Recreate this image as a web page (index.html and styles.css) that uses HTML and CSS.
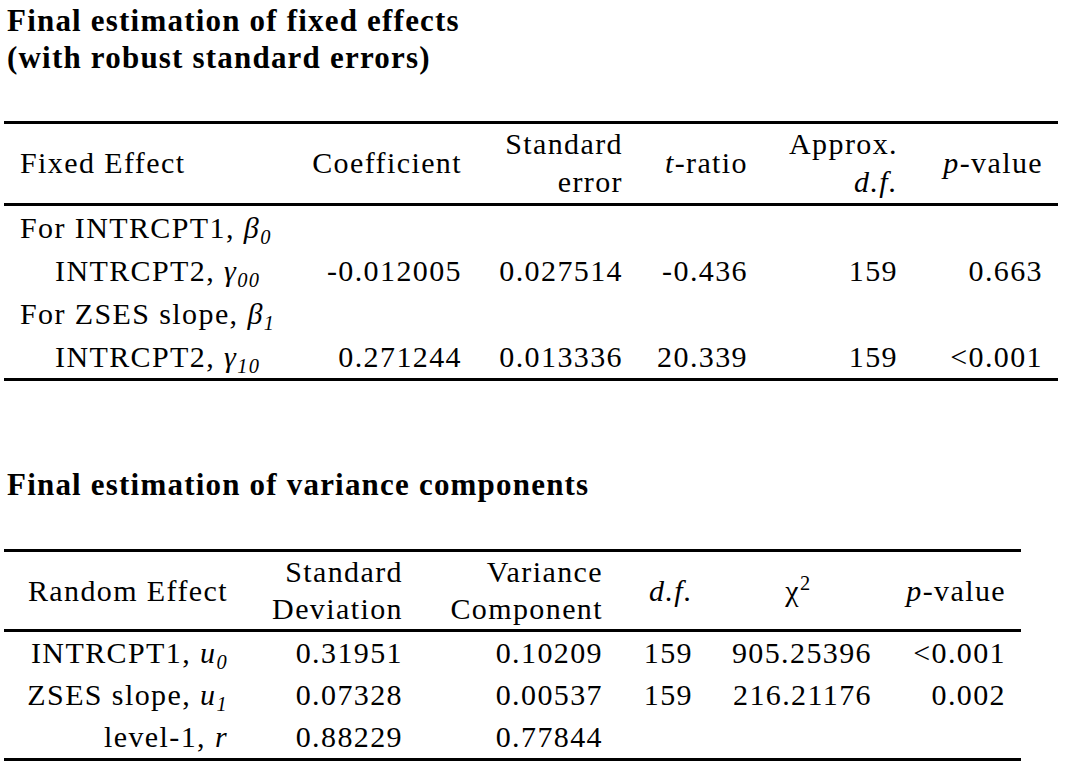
FILE: index.html
```html
<!DOCTYPE html>
<html lang="en">
<head>
<meta charset="utf-8">
<title>HLM output</title>
<link rel="stylesheet" href="styles.css">
</head>
<body>
<div class="page">
  <h1 class="title title-first">Final estimation of fixed effects<br>(with robust standard errors)</h1>
  <table class="stats fixed">
    <colgroup>
      <col class="f1"><col class="f2"><col class="f3"><col class="f4"><col class="f5"><col class="f6">
    </colgroup>
    <thead>
      <tr>
        <th class="left">Fixed Effect</th>
        <th>Coefficient</th>
        <th>Standard<br>error</th>
        <th><i>t</i>-ratio</th>
        <th>Approx.<br><i>d.f.</i></th>
        <th class="last"><i>p</i>-value</th>
      </tr>
    </thead>
    <tbody>
      <tr>
        <td class="left">For INTRCPT1, <i>β<sub>0</sub></i></td>
        <td></td><td></td><td></td><td></td><td class="last"></td>
      </tr>
      <tr>
        <td class="left indent">INTRCPT2, <i>γ<sub>00</sub></i></td>
        <td>-0.012005</td><td>0.027514</td><td>-0.436</td><td>159</td><td class="last">0.663</td>
      </tr>
      <tr>
        <td class="left">For ZSES slope, <i>β<sub>1</sub></i></td>
        <td></td><td></td><td></td><td></td><td class="last"></td>
      </tr>
      <tr>
        <td class="left indent">INTRCPT2, <i>γ<sub>10</sub></i></td>
        <td>0.271244</td><td>0.013336</td><td>20.339</td><td>159</td><td class="last">&lt;0.001</td>
      </tr>
    </tbody>
  </table>

  <h1 class="title title-second">Final estimation of variance components</h1>
  <table class="stats variance">
    <colgroup>
      <col class="v1"><col class="v2"><col class="v3"><col class="v4"><col class="v5"><col class="v6">
    </colgroup>
    <thead>
      <tr>
        <th>Random Effect</th>
        <th>Standard<br>Deviation</th>
        <th>Variance<br>Component</th>
        <th><i>d.f.</i></th>
        <th class="chi">χ<sup>2</sup></th>
        <th class="last"><i>p</i>-value</th>
      </tr>
    </thead>
    <tbody>
      <tr>
        <td>INTRCPT1, <i>u<sub>0</sub></i></td>
        <td>0.31951</td><td>0.10209</td><td>159</td><td>905.25396</td><td class="last">&lt;0.001</td>
      </tr>
      <tr>
        <td>ZSES slope, <i>u<sub>1</sub></i></td>
        <td>0.07328</td><td>0.00537</td><td>159</td><td>216.21176</td><td class="last">0.002</td>
      </tr>
      <tr>
        <td>level-1, <i>r</i></td>
        <td>0.88229</td><td>0.77844</td><td></td><td></td><td class="last"></td>
      </tr>
    </tbody>
  </table>
</div>
</body>
</html>
```

FILE: styles.css
```css
html, body {
  margin: 0;
  padding: 0;
  background: #ffffff;
}

.page {
  padding: 0 0 0 4px;
  font-family: "Liberation Serif", "Times New Roman", serif;
  color: #000000;
}

.title {
  margin: 0;
  padding-left: 3px;
  font-size: 31px;
  line-height: 37px;
  font-weight: bold;
  letter-spacing: 1.2px;
}

.title-first {
  padding-top: 2px;
}

.title-second {
  margin-top: 85px;
}

.stats {
  border-collapse: separate;
  border-spacing: 0;
  table-layout: fixed;
  font-size: 30px;
  letter-spacing: 1.4px;
}

.stats th,
.stats td {
  padding: 0 8px 0 0;
  text-align: right;
  vertical-align: middle;
  font-weight: normal;
  white-space: nowrap;
}

.stats th {
  border-top: 3px solid #000;
  border-bottom: 3px solid #000;
}

.stats td {
  line-height: 43px;
}

.stats tbody tr:last-child td {
  border-bottom: 3px solid #000;
}

.stats .left {
  text-align: left;
  padding-left: 16px;
}

.stats .indent {
  padding-left: 51px;
}

.stats .last {
  padding-right: 15px;
}

.fixed {
  margin-top: 45px;
  width: 1054px;
}

.fixed th {
  line-height: 38px;
  padding-top: 1px;
  padding-bottom: 2px;
}

.f1 { width: 296px; }
.f2 { width: 170px; }
.f3 { width: 161px; }
.f4 { width: 125px; }
.f5 { width: 150px; }
.f6 { width: 152px; }

.variance {
  margin-top: 46px;
  width: 1017px;
}

.variance th {
  line-height: 37px;
  padding-top: 1px;
  padding-bottom: 2px;
}

.variance td {
  line-height: 42px;
}

.v1 { width: 232px; }
.v2 { width: 175px; }
.v3 { width: 200px; }
.v4 { width: 90px; }
.v5 { width: 179px; }
.v6 { width: 141px; }

.stats th.chi {
  text-align: center;
  padding-left: 24px;
}

sub {
  font-size: 0.68em;
  line-height: 0;
  vertical-align: -0.28em;
}

sup {
  font-size: 0.68em;
  line-height: 0;
  vertical-align: 0.55em;
  font-style: normal;
}
```
